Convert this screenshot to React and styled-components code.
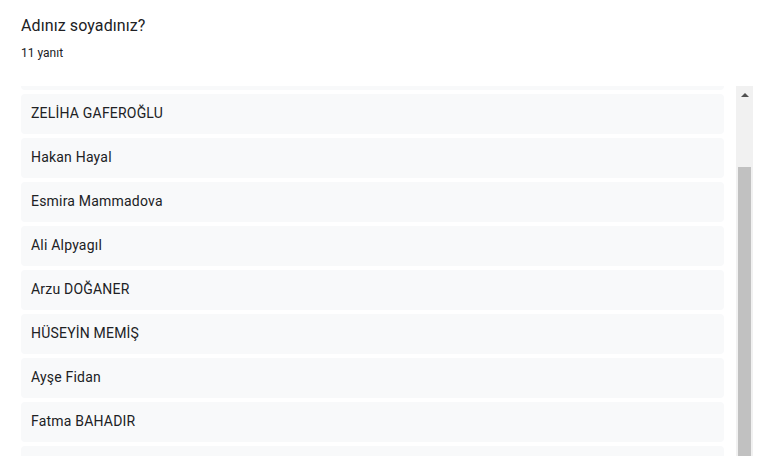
import React, { useEffect, useRef, useState } from 'react'
import styled, { createGlobalStyle } from 'styled-components'

const GlobalStyle = createGlobalStyle`
  html, body {
    margin: 0;
    padding: 0;
    background: #ffffff;
    font-family: Roboto, "Noto Sans", Arial, sans-serif;
    color: #202124;
  }
`

const Page = styled.div`
  padding: 14px 9px 0 21px;
`

const Question = styled.div`
  font-size: 16px;
  line-height: 24px;
  letter-spacing: 0.1px;
  color: #202124;
`

const Count = styled.div`
  margin-top: 7px;
  font-size: 12px;
  line-height: 16px;
  color: #202124;
`

const ListFrame = styled.div`
  margin-top: 25px;
  height: 400px;
  display: flex;
`

const List = styled.div`
  flex: 1;
  overflow-y: scroll;
  scrollbar-width: none;
  padding: 6px 12px 6px 0;
  box-sizing: border-box;
  display: flex;
  flex-direction: column;
  gap: 4px;

  &::-webkit-scrollbar {
    display: none;
  }
`

const ScrollTrack = styled.div`
  flex: none;
  width: 17px;
  background: #f1f1f1;
  display: flex;
  flex-direction: column;
  align-items: center;
`

const ArrowButton = styled.div`
  flex: none;
  width: 17px;
  height: 17px;
  display: flex;
  align-items: center;
  justify-content: center;
`

const Thumb = styled.div`
  flex: none;
  width: 13px;
  background: #c1c1c1;
`

const Answer = styled.div`
  flex: none;
  height: 40px;
  box-sizing: border-box;
  padding: 9px 10px 11px;
  background: #f8f9fa;
  border-radius: 4px;
  font-size: 14px;
  line-height: 20px;
  letter-spacing: 0.2px;
  color: #202124;
`

const answers = [
  'Mehmet Yılmaz',
  'Elif Kaya',
  'ZELİHA GAFEROĞLU',
  'Hakan Hayal',
  'Esmira Mammadova',
  'Ali Alpyagıl',
  'Arzu DOĞANER',
  'HÜSEYİN MEMİŞ',
  'Ayşe Fidan',
  'Fatma BAHADIR',
  'Zeynep Demir',
]

const ARROW = 17

export default function App() {
  const listRef = useRef(null)
  const [thumb, setThumb] = useState({ top: 64, size: 297 })

  useEffect(() => {
    const el = listRef.current
    if (!el) return
    el.scrollTop = 86
    const track = el.clientHeight - ARROW * 2
    setThumb({
      top: (el.scrollTop / el.scrollHeight) * track,
      size: (el.clientHeight / el.scrollHeight) * track,
    })
  }, [])

  return (
    <Page>
      <GlobalStyle />
      <Question>Adınız soyadınız?</Question>
      <Count>11 yanıt</Count>
      <ListFrame>
        <List ref={listRef}>
          {answers.map((name, i) => (
            <Answer key={i}>{name}</Answer>
          ))}
        </List>
        <ScrollTrack>
          <ArrowButton>
            <svg width="8" height="4" viewBox="0 0 8 4">
              <path d="M0 4 L4 0 L8 4 Z" fill="#505050" />
            </svg>
          </ArrowButton>
          <Thumb style={{ marginTop: thumb.top, height: thumb.size }} />
        </ScrollTrack>
      </ListFrame>
    </Page>
  )
}
